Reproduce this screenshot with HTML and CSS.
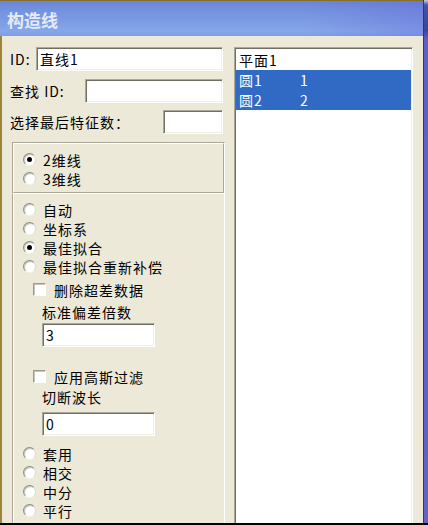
FILE: index.html
```html
<!DOCTYPE html>
<html lang="zh-CN">
<head>
<meta charset="utf-8">
<title>构造线</title>
<link rel="stylesheet" href="styles.css">
</head>
<body>
<div class="screen">
  <div class="stage">
    <div class="window">
      <div class="titlebar"><span class="title">构造线</span></div>
      <div class="client">
        <div class="leftcol">
          <div class="field field1"><span class="lbl">ID:</span><div class="input w-id">直线1</div></div>
          <div class="field field2"><span class="lbl">查找 ID:</span><div class="input w-find"></div></div>
          <div class="field field3"><span class="lbl">选择最后特征数：</span><div class="input w-count"></div></div>
          <div class="box box1">
            <div class="inner">
              <div class="radio-row"><span class="radio on"></span><span>2维线</span></div>
              <div class="radio-row"><span class="radio"></span><span>3维线</span></div>
            </div>
          </div>
          <div class="box box2">
            <div class="inner">
              <div class="radio-row"><span class="radio"></span><span>自动</span></div>
              <div class="radio-row"><span class="radio"></span><span>坐标系</span></div>
              <div class="radio-row"><span class="radio on"></span><span>最佳拟合</span></div>
              <div class="radio-row"><span class="radio"></span><span>最佳拟合重新补偿</span></div>
              <div class="check-row cr1"><span class="check"></span><span>删除超差数据</span></div>
              <div class="sub-label sl1">标准偏差倍数</div>
              <div class="input sub-input si1">3</div>
              <div class="check-row cr2"><span class="check"></span><span>应用高斯过滤</span></div>
              <div class="sub-label sl2">切断波长</div>
              <div class="input sub-input si2">0</div>
              <div class="radio-group">
                <div class="radio-row"><span class="radio"></span><span>套用</span></div>
                <div class="radio-row"><span class="radio"></span><span>相交</span></div>
                <div class="radio-row"><span class="radio"></span><span>中分</span></div>
                <div class="radio-row"><span class="radio"></span><span>平行</span></div>
                <div class="radio-row"><span class="radio"></span></div>
              </div>
            </div>
          </div>
        </div>
        <div class="list">
          <div class="row"><span class="c1">平面1</span></div>
          <div class="row sel"><span class="c1">圆1</span><span class="c2">1</span></div>
          <div class="row sel"><span class="c1">圆2</span><span class="c2">2</span></div>
        </div>
      </div>
    </div>
    <div class="strip"></div>
  </div>
  <div class="bottomline"></div>
</div>
</body>
</html>
```
FILE: styles.css
```css
html, body {
  margin: 0;
  padding: 0;
}
body {
  width: 428px;
  height: 525px;
  overflow: hidden;
  background: #000;
  font-family: "Noto Sans CJK SC", "Liberation Sans", sans-serif;
  font-size: 14px;
  letter-spacing: 1px;
  color: #000;
}
.screen {
  display: flex;
  flex-direction: column;
  height: 525px;
}
.stage {
  display: flex;
  height: 523px;
  overflow: hidden;
}
.bottomline {
  height: 2px;
  background: #000;
}
.window {
  width: 423px;
  display: flex;
  flex-direction: column;
}
.titlebar {
  height: 36px;
  box-sizing: border-box;
  border-top: 1px solid #86702c;
  background:
    linear-gradient(90deg, rgba(255,255,255,0) 72%, rgba(96,90,214,0.28) 100%),
    linear-gradient(180deg, #6a85d9 0%, #7593df 30%, #7d9ce4 60%, #85a7ea 86%, #7e9ee5 100%);
  display: flex;
  align-items: center;
  padding-left: 7px;
  padding-top: 2px;
}
.title {
  font-size: 17px;
  font-weight: 700;
  letter-spacing: 0;
  color: #e4ebf8;
  line-height: 20px;
}
.client {
  flex: 1;
  min-height: 0;
  overflow: hidden;
  background: #ece9d8;
  border-left: 2px solid #9b8538;
  display: flex;
  align-items: stretch;
  padding-top: 11px;
}
.leftcol {
  width: 215px;
  margin-left: 8px;
  display: flex;
  flex-direction: column;
  flex: none;
}
.field {
  display: flex;
  align-items: center;
  justify-content: space-between;
  height: 24px;
  width: 213px;
  flex: none;
}
.field1 { margin-bottom: 8px; }
.field2 { margin-bottom: 7px; }
.field3 { margin-bottom: 8px; }
.lbl {
  line-height: 19px;
  white-space: nowrap;
}
.input {
  box-sizing: border-box;
  height: 24px;
  background: #fff;
  border: 1px solid;
  border-color: #aca899 #fff #fff #aca899;
  box-shadow: inset 1px 1px 0 #716f64, inset -1px -1px 0 #f1efe2;
  padding-left: 3px;
  line-height: 22px;
  white-space: nowrap;
  flex: none;
}
.w-id { width: 187px; }
.w-find { width: 138px; }
.w-count { width: 60px; }

.box {
  margin-left: 2px;
  width: 213px;
  box-sizing: border-box;
  flex: none;
}
.box1 {
  border: 1px solid;
  border-color: #aca899 #fff #fff #aca899;
}
.box1 .inner {
  border: 1px solid;
  border-color: #fff #aca899 #aca899 #fff;
  padding: 6px 0 4px 9px;
}
.box2 {
  flex: 1 0 auto;
  border-left: 1px solid #aca899;
  border-right: 1px solid #fff;
}
.box2 .inner {
  border-left: 1px solid #fff;
  padding: 6px 0 0 9px;
}
.radio-row {
  display: flex;
  align-items: center;
  height: 19px;
  white-space: nowrap;
}
.radio {
  flex: none;
  width: 13px;
  height: 13px;
  box-sizing: border-box;
  border-radius: 50%;
  border: 1px solid;
  border-color: #8f8d83 #dcdbd3 #f4f3ee #8f8d83;
  background: radial-gradient(circle at 60% 60%, #ffffff 45%, #e9e7dc 100%);
  box-shadow: inset 1px 1px 0 #c9c7bc;
  margin-right: 7px;
  display: flex;
  align-items: center;
  justify-content: center;
}
.radio.on::after {
  content: "";
  width: 5px;
  height: 5px;
  border-radius: 50%;
  background: #000;
}
.check-row {
  display: flex;
  align-items: center;
  height: 19px;
  margin-left: 10px;
  white-space: nowrap;
}
.check {
  flex: none;
  width: 13px;
  height: 13px;
  box-sizing: border-box;
  background: #fff;
  border: 1px solid;
  border-color: #9d9b90 #fff #fff #9d9b90;
  box-shadow: inset 1px 1px 0 #c8c6bb;
  margin-right: 8px;
}
.cr1 { margin-top: 4px; }
.cr2 { margin-top: 20px; }
.sub-label {
  margin-left: 19px;
  line-height: 19px;
  height: 19px;
  white-space: nowrap;
}
.sl1 { margin-top: 4px; }
.sl2 { margin-top: 2px; }
.sub-input {
  margin-left: 19px;
  width: 113px;
}
.si1 { margin-top: 1px; }
.si2 { margin-top: 5px; }
.radio-group { margin-top: 8px; }

.list {
  flex: none;
  width: 179px;
  margin-left: 9px;
  box-sizing: border-box;
  background: #fff;
  border-top: 1px solid #aca899;
  border-left: 1px solid #aca899;
  border-right: 1px solid #fff;
  box-shadow: inset 1px 1px 0 #716f64, inset -1px 0 0 #f1efe2;
  padding: 2px 1px 0 1px;
}
.row {
  display: flex;
  height: 20px;
  line-height: 20px;
  padding-left: 3px;
  white-space: nowrap;
}
.row.sel {
  background: #316ac5;
  color: #fff;
}
.c1 { width: 61px; flex: none; }
.strip {
  flex: none;
  width: 4px;
  border-left: 1px solid #2c3582;
  background: linear-gradient(180deg, #c9cbe6 0, #4550a8 5px, #3a449c 30px, #5e5fc8 40px, #6461c9 100%);
}
```
